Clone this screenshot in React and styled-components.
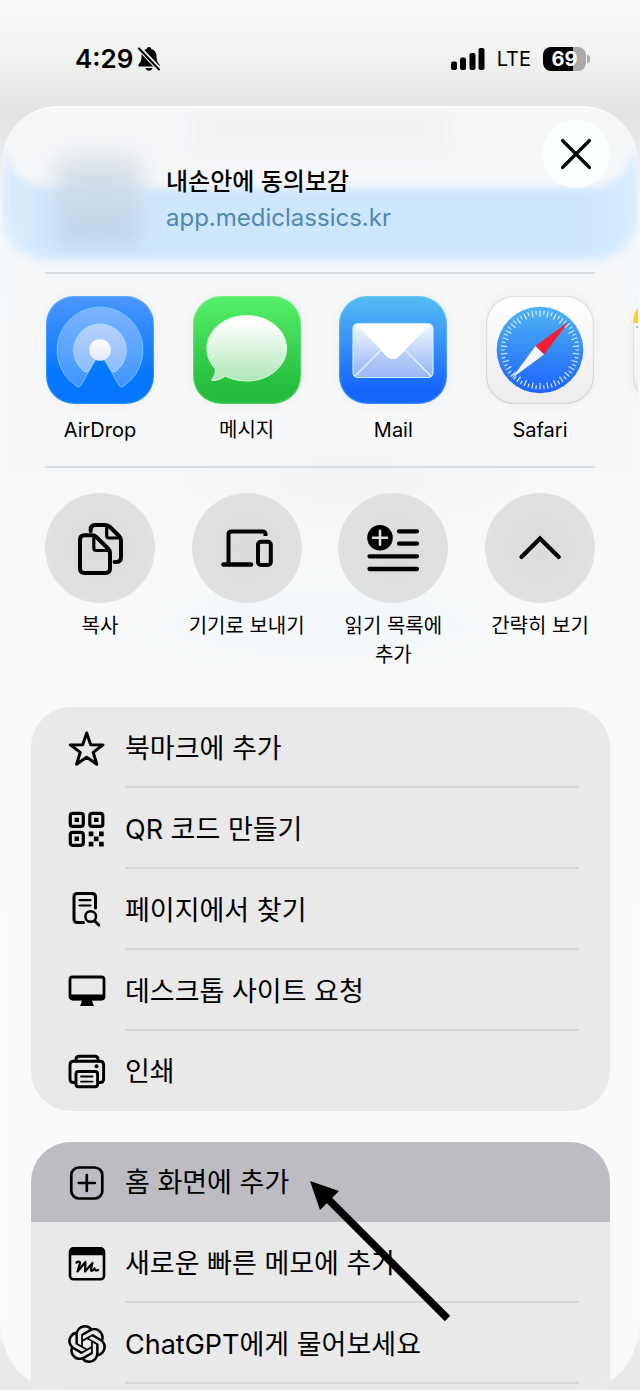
import React from "react";
import styled, { createGlobalStyle } from "styled-components";
import { SiOpenai } from "react-icons/si";

const GlobalStyle = createGlobalStyle`
  * {
    box-sizing: border-box;
  }
  body {
    margin: 0;
    background: #e9e9e9;
    color: #000;
    font-family: Inter, "Noto Sans CJK KR", sans-serif;
  }
  button {
    border: 0;
    padding: 0;
    background: none;
    color: inherit;
    font: inherit;
    cursor: pointer;
  }
  ul {
    list-style: none;
    margin: 0;
    padding: 0;
  }
  svg {
    display: block;
  }
`;

/* ---------- layout ---------- */

const Page = styled.div`
  display: flex;
  flex-direction: column;
  min-height: 100vh;
  padding: 0 2px;
  overflow: hidden;
  background: linear-gradient(#fafaf9 0, #f3f3f2 50px, #e3e3e3 115px, #e9ebec 150px, #f0f6fa 200px, #f6f9fb 260px, #fcfcfc 1320px, #e9e9e9 1350px);
`;

const StatusBar = styled.header`
  display: flex;
  align-items: center;
  justify-content: space-between;
  height: 106px;
  padding: 12px 52px 0 73px;
`;

const StatusGroup = styled.div`
  display: flex;
  align-items: center;
  gap: ${(p) => p.$gap}px;
`;

const Time = styled.span`
  font-size: 26px;
  font-weight: 600;
  line-height: 32px;
`;

const Network = styled.span`
  font-size: 20px;
  line-height: 28px;
`;

const Battery = styled.span`
  position: relative;
  width: 43px;
  height: 24px;
  border-radius: 8px;
  background: linear-gradient(90deg, #000 69%, #a9a9a9 69%);
  color: #fff;
  font-size: 20px;
  font-weight: 700;
  line-height: 24px;
  text-align: center;

  &::after {
    content: "";
    position: absolute;
    top: 8px;
    right: -4px;
    width: 3px;
    height: 8px;
    border-radius: 0 3px 3px 0;
    background: #a9a9a9;
  }
`;

const Sheet = styled.main`
  position: relative;
  display: flex;
  flex: 1;
  flex-direction: column;
  overflow: hidden;
  border-radius: 56px 56px 60px 60px;
  background:
    radial-gradient(ellipse 170px 50px at 55% 375px, #f3f4f5, transparent),
    radial-gradient(ellipse 260px 60px at 50% 520px, #f3f8fa, transparent),
    linear-gradient(#f6f8fa 0, #f6f8fa 360px, #fafafa 600px, #fafafa 100%);
  box-shadow: inset 0 2px 1px #fff;
`;

/* colours of the web page that show through the glass */
const Glass = styled.div`
  position: absolute;
  inset: 2px 0 auto;
  height: 158px;
  overflow: hidden;
  border-radius: 54px 54px 0 0;
`;

const BlueBand = styled.div`
  position: absolute;
  inset: 44px 0 7px;
  border-radius: 0 0 44px 44px;
  background: linear-gradient(90deg, #dcedfb 0, #cde7fe 9%, #cde7fe 91%, #d9ecfc 100%);
  filter: blur(5px);
`;

const WhiteBand = styled.div`
  position: absolute;
  inset: -20px 3px 78px;
  border-radius: 0 0 46px 46px;
  background: #f6f7f9;
  filter: blur(4px);
`;

const Smudge = styled.div`
  position: absolute;
  top: 4px;
  left: 30%;
  width: 40%;
  height: 38px;
  background: #f0f1f2;
  filter: blur(8px);
`;

const SheetHeader = styled.section`
  position: relative;
  display: flex;
  align-items: flex-start;
  height: 168px;
  margin: 0 28px 0 43px;
`;

const Thumbnail = styled.div`
  width: 86px;
  height: 88px;
  margin: 50px 25px 0 10px;
  border-radius: 14px;
  background: linear-gradient(#dde2e7, #b9d3ea);
  filter: blur(11px);
`;

const PageInfo = styled.div`
  flex: 1;
  min-width: 0;
  padding-top: 58px;
`;

const Title = styled.h1`
  margin: 0;
  font-size: 24px;
  font-weight: 500;
  line-height: 36px;
`;

const Url = styled.a`
  display: block;
  color: #5487ad;
  font-size: 24px;
  line-height: 36px;
  text-decoration: none;
`;

const CloseButton = styled.button`
  display: grid;
  place-items: center;
  width: 68px;
  height: 68px;
  margin-top: 14px;
  border-radius: 50%;
  background: #fafeff;
`;

const Rule = styled.hr`
  position: relative;
  width: auto;
  height: 2px;
  margin: 0 43px;
  margin-top: ${(p) => (p.$pull ? "-2px" : "0")};
  border: 0;
  background: #dcdfe2;
`;

const Shelf = styled.ul`
  position: relative;
  display: grid;
  grid-auto-flow: column;
  grid-auto-columns: calc((100% - 110px) / 3);
  margin: ${(p) => p.$top}px 43px 0;
`;

const Tile = styled.button`
  display: flex;
  flex-direction: column;
  align-items: center;
  gap: ${(p) => p.$gap}px;
  width: 110px;
`;

const AppIcon = styled.span`
  width: 108px;
  height: 108px;
  overflow: hidden;
  border-radius: 28px;
  background: ${(p) => p.$fill};
  box-shadow: 0 0 14px rgba(0, 0, 0, 0.05), inset 0 0 2px ${(p) => p.$edge};
`;

const AppLabel = styled.span`
  height: 48px;
  font-size: 20px;
  line-height: 25px;
  white-space: nowrap;
`;

const RoundIcon = styled.span`
  width: 110px;
  height: 110px;
  border-radius: 50%;
  background: radial-gradient(circle, #dadbdc, #e2e3e4);
`;

const ActionLabel = styled.span`
  min-height: 58px;
  font-size: 20px;
  line-height: 29px;
  text-align: center;
  white-space: pre;
`;

const Group = styled.section`
  position: relative;
  flex: ${(p) => (p.$fill ? "1" : "none")};
  margin: ${(p) => (p.$fill ? "31px" : "37px")} 28px 0 29px;
  border-radius: ${(p) => (p.$fill ? "40px 40px 0 0" : "40px")};
  background: #e9e9e9;
`;

const Row = styled.button`
  display: flex;
  align-items: center;
  gap: 19px;
  width: 100%;
  height: ${(p) => (p.$last || p.$active ? "80px" : "81px")};
  padding: 0 31px 0 37px;
  border-radius: ${(p) => (p.$active ? "40px 40px 0 0" : "0")};
  background: ${(p) => (p.$active ? "#bdbcc2" : "none")};
  text-align: left;
`;

const RowLabel = styled.span`
  display: flex;
  flex: 1;
  align-items: center;
  align-self: stretch;
  padding-bottom: 1px;
  border-bottom: 2px solid ${(p) => (p.$plain ? "transparent" : "#d5d5d6")};
  font-size: 27px;
`;

const Arrow = styled.svg`
  position: absolute;
  top: 38px;
  left: 278px;
  pointer-events: none;
`;

/* ---------- icons ---------- */

const BellOff = () => (
  <svg width="24" height="26" viewBox="0 0 24 26" aria-hidden="true">
    <path d="M12 1c1.300 0 2.200.8 2.400 1.900 3.300 1 5.100 3.700 5.100 7.100 0 5 1.300 6.500 2.800 8.200.8 1 .3 2.300-.8 2.300h-19c-1.100 0-1.600-1.300-.8-2.300C3.200 16.500 4.500 15 4.500 10c0-3.400 1.800-6.100 5.100-7.100C9.800 1.800 10.700 1 12 1Z" />
    <path d="M8.500 22h7c-.4 1.700-1.700 2.800-3.500 2.800S8.900 23.700 8.500 22Z" />
    <path d="M1.500 1.500 23 24" stroke="#eeeeed" strokeWidth="5" />
    <path d="M2 2.500 22 23.500" stroke="#000" strokeWidth="2" strokeLinecap="round" />
  </svg>
);

const Signal = () => (
  <svg width="34" height="22" viewBox="0 0 34 22" aria-hidden="true">
    <rect x="0" y="13.500" width="6" height="8.500" rx="2" />
    <rect x="9" y="9.500" width="6" height="12.500" rx="2" />
    <rect x="18.500" y="5" width="6" height="17" rx="2" />
    <rect x="27.500" y="0" width="6" height="22" rx="2" />
  </svg>
);

const Close = () => (
  <svg width="32" height="32" viewBox="0 0 32 32" aria-hidden="true">
    <path d="M2.500 2.500 29.500 29.500M29.500 2.500 2.500 29.500" stroke="#000" strokeWidth="3.200" strokeLinecap="round" />
  </svg>
);

const AirDropArt = () => (
  <svg viewBox="0 0 108 108" aria-hidden="true">
    <defs>
      <linearGradient id="airRing" x1="0" y1="0" x2="0" y2="1">
        <stop offset="0" stopColor="#7bb4ff" />
        <stop offset="1" stopColor="#3f95ff" />
      </linearGradient>
      <linearGradient id="airInner" x1="0" y1="0" x2="0" y2="1">
        <stop offset="0" stopColor="#b8d2fb" />
        <stop offset="1" stopColor="#8cbcfc" />
      </linearGradient>
      <linearGradient id="airDot" x1="0" y1="0" x2="0" y2="1">
        <stop offset="0" stopColor="#fff" />
        <stop offset="1" stopColor="#dfe9fb" />
      </linearGradient>
    </defs>
    <path d="M34.500 90 Q32.500 92 30.500 90 A43 43 0 1 1 77.500 90 Q75.500 92 73.500 90 L54 56Z" fill="url(#airRing)" stroke="#6dc3ff" strokeWidth="1" />
    <path d="M42 75 Q40.500 77 38.500 75.500 A26.300 26.300 0 1 1 69.500 75.500 Q67.500 77 66 75 L54 55Z" fill="url(#airInner)" stroke="#9fdcff" strokeWidth="1" />
    <circle cx="54" cy="54" r="10.800" fill="url(#airDot)" />
  </svg>
);

const MessagesArt = () => (
  <svg viewBox="0 0 108 108" aria-hidden="true">
    <defs>
      <linearGradient id="bubble" x1="0" y1="0" x2="0" y2="1">
        <stop offset="0.100" stopColor="#fff" />
        <stop offset="1" stopColor="#aee6b5" />
      </linearGradient>
    </defs>
    <path
      d="M53.700 19.500c22.100 0 39.800 14.600 39.800 32.700S75.800 85 53.700 85c-7.800 0-15-1.800-21.200-5-4 2.700-8 4.300-12.700 4.600-1.400.1-1.700-.6-.8-1.600 2.800-2.800 3.800-6 3.200-10.300C16.900 67 13.900 59.900 13.900 52.200c0-18.100 17.700-32.700 39.800-32.700Z"
      fill="url(#bubble)"
      stroke="#dcffe0"
      strokeWidth="1"
    />
  </svg>
);

const MailArt = () => (
  <svg viewBox="0 0 108 108" aria-hidden="true">
    <defs>
      <linearGradient id="envelope" x1="0" y1="0" x2="0" y2="1">
        <stop offset="0" stopColor="#f4f9ff" />
        <stop offset="1" stopColor="#8fb2f3" />
      </linearGradient>
      <linearGradient id="envelopeFoot" x1="0" y1="0" x2="0" y2="1">
        <stop offset="0" stopColor="#c6d8fa" />
        <stop offset="1" stopColor="#9dbbf5" />
      </linearGradient>
    </defs>
    <rect x="14" y="27.500" width="80" height="54" rx="5" fill="url(#envelope)" />
    <path d="M17 80 54 44 91 80Z" fill="url(#envelopeFoot)" />
    <path d="M16 80 44 52M92 80 64 52" stroke="#dff2ff" strokeWidth="1.500" />
    <rect x="14" y="27.500" width="80" height="54" rx="5" fill="none" stroke="#c9edff" strokeWidth="1.200" />
    <path d="M17 28H91L62 58.500q-8 9-16 0Z" fill="#fff" />
  </svg>
);

const ticks = Array.from({ length: 60 }, (_, i) => i * 6);

const SafariArt = () => (
  <svg viewBox="0 0 108 108" aria-hidden="true">
    <defs>
      <linearGradient id="dial" x1="0" y1="0" x2="0" y2="1">
        <stop offset="0" stopColor="#4fb5f3" />
        <stop offset="1" stopColor="#1c62fb" />
      </linearGradient>
    </defs>
    <circle cx="54" cy="54" r="43.300" fill="url(#dial)" />
    {ticks.map((a) => (
      <path key={a} d={a % 12 ? "M54 14.500V18.500" : "M54 14.500V21"} transform={`rotate(${a} 54 54)`} stroke="#d4ecff" strokeWidth="1.200" />
    ))}
    <path d="M83 25.500 49.500 50 58 58.500Z" fill="#fc1a2e" />
    <path d="M25.500 82.500 49.500 50 58 58.500Z" fill="#f1f6ff" />
  </svg>
);

const NotesArt = () => (
  <svg viewBox="0 0 108 108" aria-hidden="true">
    <path d="M0 0H108V27H0Z" fill="#fdd321" />
    <path d="M3 31H105" stroke="#b5b5b5" strokeWidth="2" strokeDasharray="2 4" />
  </svg>
);

const RoundArt = ({ children, width = 4 }) => (
  <svg viewBox="0 0 110 110" fill="none" stroke="#000" strokeWidth={width} strokeLinecap="round" strokeLinejoin="round" aria-hidden="true">
    {children}
  </svg>
);

const CopyArt = () => (
  <RoundArt>
    <path d="M45.700 38V36.500Q45.700 32 50 32H60.500Q63 32 65 34L74 43Q76 45 76 47.500V64Q76 69 71.500 69H69.500" />
    <path d="M61.700 33V42.500Q61.700 45 64.200 45H75" strokeWidth="3.200" />
    <path d="M39.500 42.200H47Q49.500 42.200 51.300 44L63 55.500Q65 57.500 65 60V75.500Q65 80 60.500 80H39.500Q35 80 35 75.500V46.700Q35 42.200 39.500 42.200Z" />
    <path d="M48.800 43V55Q48.800 57.500 51.300 57.500H64" strokeWidth="3.200" />
  </RoundArt>
);

const DevicesArt = () => (
  <RoundArt>
    <path d="M36.500 71V41.500Q36.500 38.500 39.500 38.500H70.500Q73.500 38.500 73.500 41.500V43" strokeLinecap="butt" />
    <path d="M31.500 71.500H59" strokeWidth="4.500" />
    <rect x="66" y="48.700" width="12.800" height="23.300" rx="3" />
  </RoundArt>
);

const ReadingListArt = () => (
  <RoundArt width={4.300}>
    <circle cx="42" cy="44.700" r="12.800" fill="#000" stroke="none" />
    <path d="M42 37.700V51.700M35 44.700H49" stroke="#dcdddd" strokeWidth="2.600" />
    <path d="M61 38.300H79M61 50.700H79M31.500 63.300H79M31.500 76H79" />
  </RoundArt>
);

const ChevronArt = () => (
  <RoundArt width={4.200}>
    <path d="M36.500 64 55 45.500 73.700 64" strokeLinejoin="miter" />
  </RoundArt>
);

const LineIcon = ({ children, width = 3 }) => (
  <svg width="38" height="38" viewBox="0 0 38 38" fill="none" stroke="#000" strokeWidth={width} strokeLinecap="round" strokeLinejoin="round" aria-hidden="true">
    {children}
  </svg>
);

const Star = () => (
  <LineIcon>
    <path d="M18.700 4 22.700 15.700 35 15.900 25.200 23.400 28.800 35.200 18.700 28.200 8.600 35.200 12.200 23.400 2.400 15.900 14.700 15.700Z" />
  </LineIcon>
);

const QrCode = () => (
  <LineIcon width={3.200}>
    <rect x="2.300" y="3.400" width="13" height="13" rx="2.500" />
    <rect x="21.800" y="3.400" width="13" height="13" rx="2.500" />
    <rect x="2.300" y="22.300" width="13" height="13" rx="2.500" />
    <path
      d="M6.600 7.700h4.400v4.400H6.600ZM26.100 7.700h4.400v4.400h-4.400ZM6.600 26.600h4.400V31H6.600ZM20.700 21.500h4.700v4.700h-4.700ZM31 21.500h4.700v4.700H31ZM25.900 26.600h4.700v4.700h-4.700ZM20.700 31.700h4.700v4.700h-4.700ZM31 31.700h4.700v4.700H31Z"
      fill="#000"
      stroke="none"
    />
  </LineIcon>
);

const FindInPage = () => (
  <LineIcon>
    <path d="M15.500 31.500H9.500Q6 31.500 6 28V6Q6 2.500 9.500 2.500H24Q27.500 2.500 27.500 6V17" />
    <path d="M11.500 9.200H22.500M11.500 14.500H22.500" strokeWidth="2.200" />
    <circle cx="22.700" cy="25.500" r="5.300" strokeWidth="2.500" />
    <path d="M26.800 30 30.800 34" />
  </LineIcon>
);

const Desktop = () => (
  <LineIcon width={2.800}>
    <rect x="2" y="5" width="34" height="22" rx="2.500" />
    <path d="M2 22.500H36V26Q36 28.300 33.500 28.300H4.500Q2 28.300 2 26ZM14 28H24L25 32.300Q26 32.800 26 34H12Q12 32.800 13 32.300Z" fill="#000" stroke="none" />
  </LineIcon>
);

const Printer = () => (
  <LineIcon width={2.900}>
    <path d="M8 9V7.500Q8 4.300 11.200 4.300H26.800Q30 4.300 30 7.500V9" />
    <path d="M7 30.500H5.500Q2 30.500 2 27V13Q2 9.300 5.700 9.300H32Q35.600 9.300 35.600 13V27Q35.600 30.500 32 30.500H30.500" />
    <rect x="8" y="19.500" width="21.600" height="15.200" rx="2.500" />
    <path d="M13 24.500H24.500M13 29.600H24.500" strokeWidth="1.800" />
    <circle cx="28.500" cy="14.300" r="2" fill="#000" stroke="none" />
  </LineIcon>
);

const PlusSquare = () => (
  <LineIcon width={2.700}>
    <rect x="3.300" y="4.500" width="31" height="31" rx="7.500" />
    <path d="M18.800 12V28M10.800 20H26.800" />
  </LineIcon>
);

const QuickNote = () => (
  <LineIcon width={2.600}>
    <rect x="2" y="4.300" width="34" height="31" rx="3.500" />
    <path d="M2 11.300V7Q2 4 5 4H33Q36 4 36 7V11.300Z" fill="#000" stroke="none" />
    <path d="M8.500 18.500C10.500 17 12.500 17.500 11.800 20L9.500 27.500L17.500 18L17 27.500L24.500 19L23 25C22.600 27.500 24.500 27.500 26.500 24.500C27 26.500 28 27 30 26" strokeWidth="2.200" />
  </LineIcon>
);

const ChatGpt = () => <SiOpenai size={38} aria-hidden="true" />;

/* ---------- data ---------- */

const apps = [
  { name: "AirDrop", art: AirDropArt, fill: "linear-gradient(#4b96ff, #0577ff 70%)", edge: "#8fd0ff" },
  { name: "메시지", art: MessagesArt, fill: "linear-gradient(#55f069, #25bd3d 85%)", edge: "#b6ffc0" },
  { name: "Mail", art: MailArt, fill: "linear-gradient(#55bdf2, #1767fc 85%)", edge: "#9fe2ff" },
  { name: "Safari", art: SafariArt, fill: "linear-gradient(#fff, #ececec)", edge: "#9a9a9a" },
  { name: "", art: NotesArt, fill: "linear-gradient(#fff, #f1f1f1)", edge: "#9a9a9a" },
];

const actions = [
  { name: "복사", art: CopyArt },
  { name: "기기로 보내기", art: DevicesArt },
  { name: "읽기 목록에\n추가", art: ReadingListArt },
  { name: "간략히 보기", art: ChevronArt },
];

const pageRows = [
  { name: "북마크에 추가", icon: Star },
  { name: "QR 코드 만들기", icon: QrCode },
  { name: "페이지에서 찾기", icon: FindInPage },
  { name: "데스크톱 사이트 요청", icon: Desktop },
  { name: "인쇄", icon: Printer, last: true },
];

const moreRows = [
  { name: "홈 화면에 추가", icon: PlusSquare, active: true },
  { name: "새로운 빠른 메모에 추가", icon: QuickNote },
  { name: "ChatGPT에게 물어보세요", icon: ChatGpt },
];

const RowList = ({ rows }) => (
  <ul>
    {rows.map(({ name, icon: Icon, active, last }) => (
      <li key={name}>
        <Row type="button" $active={active} $last={last}>
          <Icon />
          <RowLabel $plain={active || last}>{name}</RowLabel>
        </Row>
      </li>
    ))}
  </ul>
);

export default function App() {
  return (
    <Page>
      <GlobalStyle />
      <StatusBar>
        <StatusGroup $gap={4}>
          <Time>4:29</Time>
          <BellOff />
        </StatusGroup>
        <StatusGroup $gap={12}>
          <Signal />
          <Network>LTE</Network>
          <Battery>69</Battery>
        </StatusGroup>
      </StatusBar>

      <Sheet>
        <Glass>
          <BlueBand />
          <WhiteBand />
          <Smudge />
        </Glass>
        <SheetHeader>
          <Thumbnail />
          <PageInfo>
            <Title>내손안에 동의보감</Title>
            <Url href="#">app.mediclassics.kr</Url>
          </PageInfo>
          <CloseButton type="button" aria-label="닫기">
            <Close />
          </CloseButton>
        </SheetHeader>
        <Rule $pull />

        <Shelf $top={22}>
          {apps.map(({ name, art: Art, fill, edge }) => (
            <li key={name}>
              <Tile type="button" $gap={14}>
                <AppIcon $fill={fill} $edge={edge}>
                  <Art />
                </AppIcon>
                <AppLabel>{name}</AppLabel>
              </Tile>
            </li>
          ))}
        </Shelf>
        <Rule />

        <Shelf $top={25}>
          {actions.map(({ name, art: Art }) => (
            <li key={name}>
              <Tile type="button" $gap={9}>
                <RoundIcon>
                  <Art />
                </RoundIcon>
                <ActionLabel>{name}</ActionLabel>
              </Tile>
            </li>
          ))}
        </Shelf>

        <Group>
          <RowList rows={pageRows} />
        </Group>

        <Group $fill>
          <RowList rows={moreRows} />
          <Arrow width="146" height="146" viewBox="0 0 146 146" aria-hidden="true">
            <path d="M16 16 138.500 138.500" stroke="#000" strokeWidth="7.500" />
            <path d="M1 1 30 11 11 30Z" />
          </Arrow>
        </Group>
      </Sheet>
    </Page>
  );
}
